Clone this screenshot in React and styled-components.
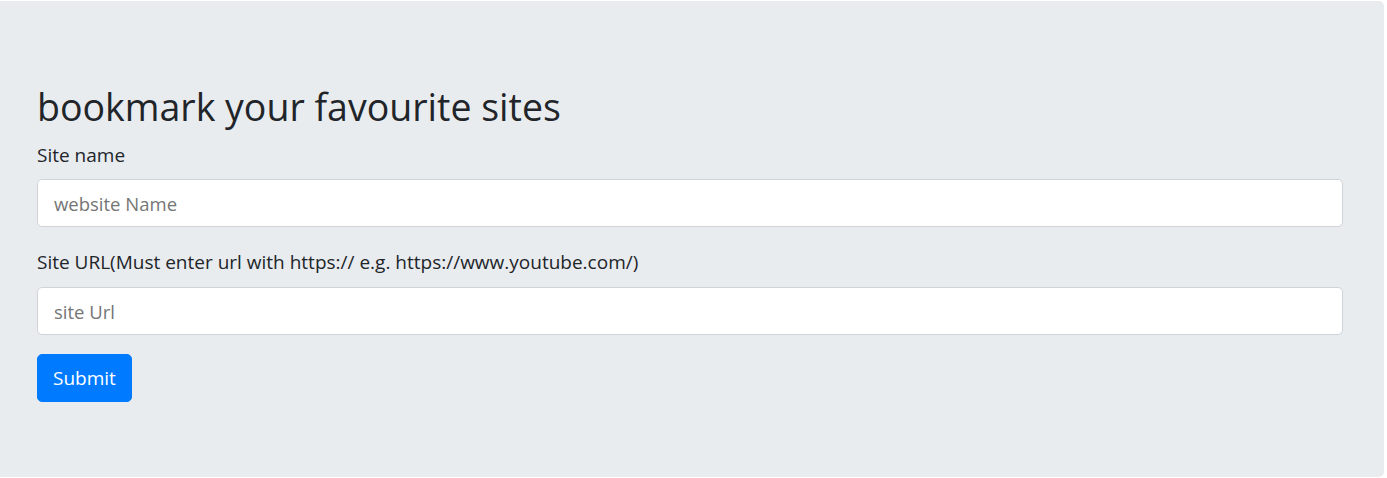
import React from 'react';
import styled, { createGlobalStyle } from 'styled-components';

const GlobalStyle = createGlobalStyle`
body {
    margin: 0;
    background: #fff;
    font-family: "Open Sans", "Noto Sans", sans-serif;
    color: #212529;
}
* {
    box-sizing: border-box;
}
`

const Jumbotron = styled.div`
width: 1384px;
margin-top: 1px;
padding: 82px 41px 75px 37px;
background-color: #e9ecef;
border-radius: 0 5px 5px 0;
display: flex;
flex-direction: column;
`

const Heading = styled.h1`
margin: 0 0 9px 0;
font-size: 37.5px;
font-weight: 400;
line-height: 48px;
`

const Label = styled.label`
display: block;
font-size: 19px;
line-height: 30px;
margin-top: ${props => props.gap || 0}px;
margin-bottom: ${props => props.below || 9}px;
`

const Input = styled.input`
display: block;
width: 100%;
height: 48px;
padding: 8px 16px;
border: 1px solid #ced4da;
border-radius: 5px;
background: #fff;
font-family: inherit;
font-size: 18.5px;
line-height: 30px;
color: #495057;
outline: none;
::placeholder {
    color: #6c757d;
}
`

const Button = styled.button`
align-self: flex-start;
margin-top: 19px;
height: 48px;
padding: 8px 15px;
border: 1px solid #007bff;
border-radius: 5px;
background-color: #007bff;
color: #fff;
font-family: inherit;
font-size: 19px;
line-height: 30px;
cursor: pointer;
`

export default class App extends React.Component {
    state = {
        siteName: "",
        siteUrl: ""
    }

    onChangeName = (event) => {
        this.setState({ siteName: event.target.value })
    }

    onChangeUrl = (event) => {
        this.setState({ siteUrl: event.target.value })
    }

    render() {
        return (
            <Jumbotron>
                <GlobalStyle />
                <Heading>bookmark your favourite sites</Heading>
                <Label>Site name</Label>
                <Input
                    placeholder="website Name"
                    value={this.state.siteName}
                    onChange={this.onChangeName}
                />
                <Label gap={20} below={10}>Site URL(Must enter url with https:// e.g. https://www.youtube.com/)</Label>
                <Input
                    placeholder="site Url"
                    value={this.state.siteUrl}
                    onChange={this.onChangeUrl}
                />
                <Button type="submit">Submit</Button>
            </Jumbotron>
        )
    }
}
